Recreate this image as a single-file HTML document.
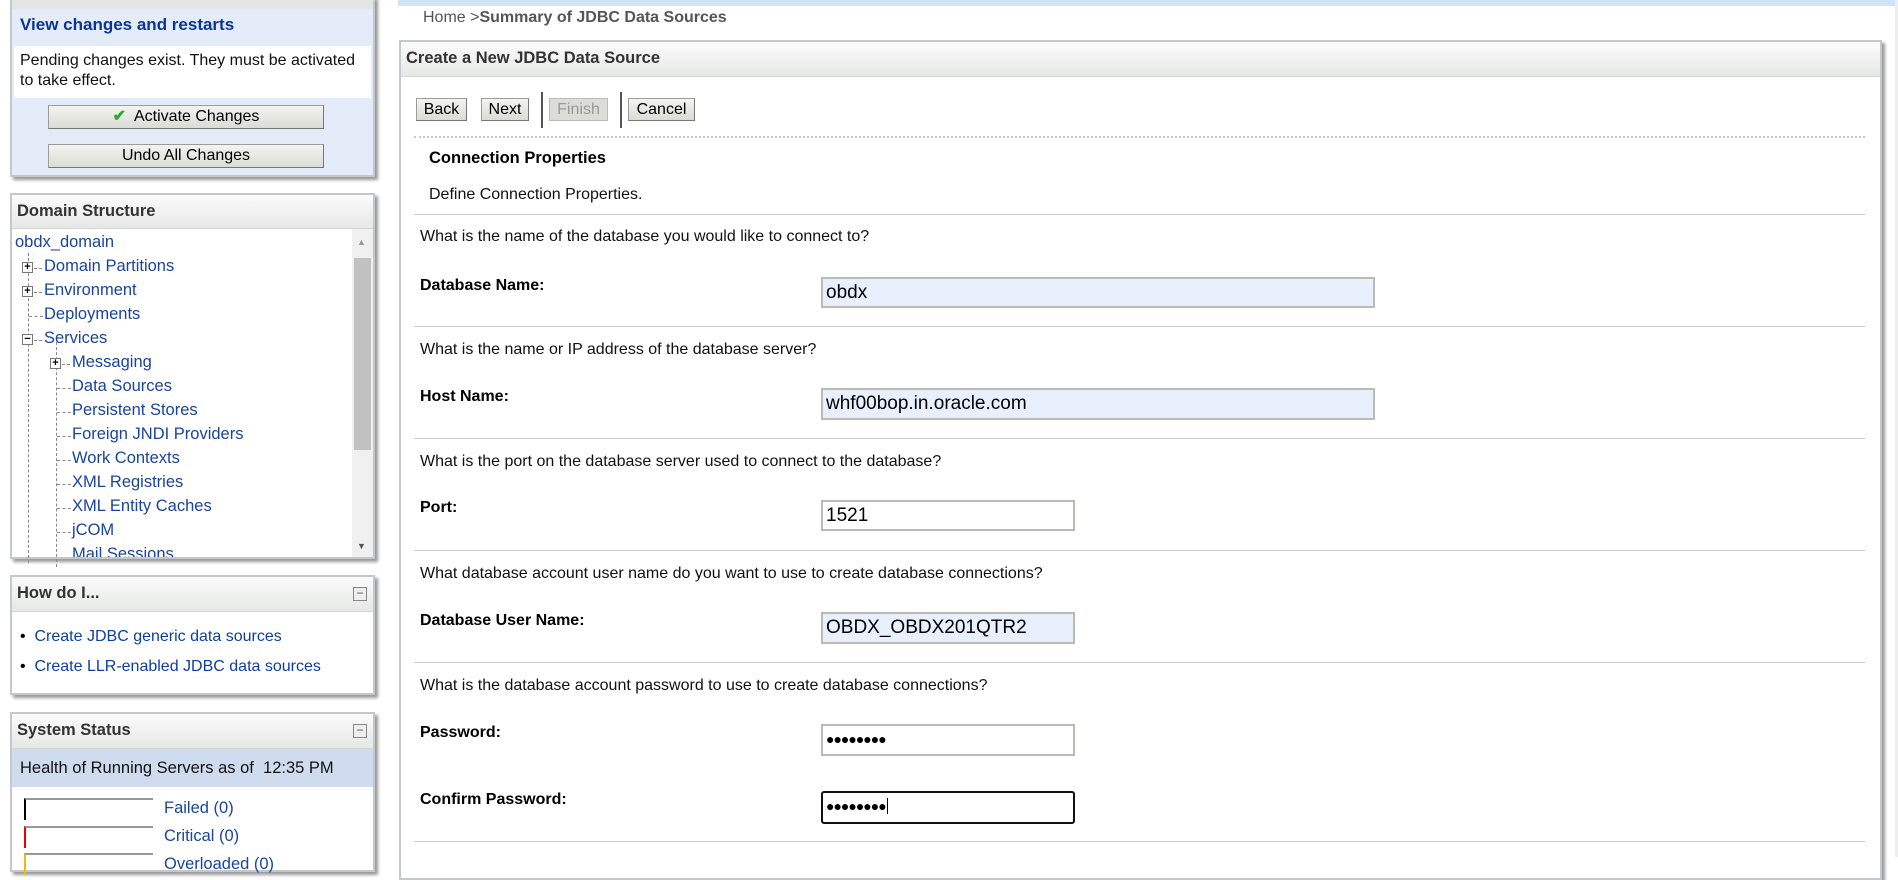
<!DOCTYPE html>
<html><head><meta charset="utf-8"><style>
*{margin:0;padding:0;box-sizing:border-box}
body{width:1898px;height:857px;overflow:hidden;background:#fff;font-family:"Liberation Sans",Arial,sans-serif;position:relative;color:#000}
.a{position:absolute}
.panel{position:absolute;background:#fff;border:2px solid #c5c8cb;box-shadow:3px 3px 3px #9a9a9a}
.hdr{position:absolute;left:0;right:0;top:0;background:linear-gradient(#fbfbfb,#e6e8e6);border-bottom:1px solid #d5d7d5;font-weight:bold;font-size:16.5px;color:#333;padding-left:5px}
.btn{position:absolute;background:linear-gradient(#f4f4f0,#dcdcd6);border:1px solid #9c9c9c;border-right-color:#777;border-bottom-color:#777;font-family:"Liberation Sans",Arial,sans-serif;font-size:16px;text-align:center;color:#000}
.lk{color:#0d3ea6;font-size:16px}
.q{position:absolute;left:420px;font-size:16px;color:#111}
.lb{position:absolute;left:420px;font-size:16px;font-weight:bold}
.in{position:absolute;left:821px;border:2px solid #bbbbb4;background:#e8f0fd;font-family:"Liberation Sans",Arial,sans-serif;font-size:19px;padding-left:3px;line-height:27px}
.ln{position:absolute;left:414px;width:1451px;height:0;border-top:1px solid #ccc}
.tr{position:absolute;font-size:16.5px;color:#1a44a0;white-space:nowrap}
.bx{position:absolute;width:11px;height:11px;border:1px solid #777;background:#fff;font-size:11px;line-height:8px;text-align:center;font-weight:bold;color:#000;font-family:"Liberation Sans",sans-serif}
</style></head><body>

<div class="panel" style="left:10px;top:-4px;width:365px;height:181px;background:#e4ecfa">
  <div class="a" style="left:0;right:0;top:0;height:11px;background:#e5e6e4"></div>
  <div class="a" style="left:8px;top:17px;font-weight:bold;font-size:17px;color:#0a3596">View changes and restarts</div>
  <div class="a" style="left:2px;right:2px;top:48px;height:52px;background:#fff;padding:5px 6px;font-size:16px;line-height:20px;color:#111">Pending changes exist. They must be activated to take effect.</div>
  <div class="btn" style="left:36px;top:107px;width:276px;height:24px;line-height:22px"><span style="color:#2ea82e;font-weight:bold">✔</span>&nbsp; Activate Changes</div>
  <div class="btn" style="left:36px;top:146px;width:276px;height:24px;line-height:22px">Undo All Changes</div>
</div>

<div class="panel" style="left:10px;top:193px;width:365px;height:366px">
  <div class="hdr" style="height:34px;line-height:32px">Domain Structure</div>
  <div class="a" style="left:340px;top:34px;width:21px;bottom:0;background:#f0f0f0"></div>
  <div class="a" style="left:342px;top:63px;width:17px;height:192px;background:#c1c1c1"></div>
  <div class="a" style="left:345px;top:42px;font-size:9px;color:#999">▲</div>
  <div class="a" style="left:345px;top:346px;font-size:9px;color:#555">▼</div>
  <div class="a" style="left:16px;top:58px;width:0;height:310px;border-left:1px dashed #888"></div>
  <div class="a" style="left:44px;top:142px;width:0;height:230px;border-left:1px dashed #888"></div>
  <div class="tr" style="left:3px;top:38px">obdx_domain</div>
  <div class="bx" style="left:10px;top:67px">+</div><div class="a" style="left:22px;top:73px;width:8px;border-top:1px dashed #888"></div><div class="tr" style="left:32px;top:62px">Domain Partitions</div>
  <div class="bx" style="left:10px;top:91px">+</div><div class="a" style="left:22px;top:97px;width:8px;border-top:1px dashed #888"></div><div class="tr" style="left:32px;top:86px">Environment</div>
  <div class="a" style="left:17px;top:121px;width:14px;border-top:1px dashed #888"></div><div class="tr" style="left:32px;top:110px">Deployments</div>
  <div class="bx" style="left:10px;top:139px">−</div><div class="a" style="left:22px;top:145px;width:8px;border-top:1px dashed #888"></div><div class="tr" style="left:32px;top:134px">Services</div>
  <div class="bx" style="left:38px;top:163px">+</div><div class="a" style="left:50px;top:169px;width:8px;border-top:1px dashed #888"></div><div class="tr" style="left:60px;top:158px">Messaging</div>
  <div class="a" style="left:45px;top:193px;width:14px;border-top:1px dashed #888"></div><div class="tr" style="left:60px;top:182px">Data Sources</div>
  <div class="a" style="left:45px;top:217px;width:14px;border-top:1px dashed #888"></div><div class="tr" style="left:60px;top:206px">Persistent Stores</div>
  <div class="a" style="left:45px;top:241px;width:14px;border-top:1px dashed #888"></div><div class="tr" style="left:60px;top:230px">Foreign JNDI Providers</div>
  <div class="a" style="left:45px;top:265px;width:14px;border-top:1px dashed #888"></div><div class="tr" style="left:60px;top:254px">Work Contexts</div>
  <div class="a" style="left:45px;top:289px;width:14px;border-top:1px dashed #888"></div><div class="tr" style="left:60px;top:278px">XML Registries</div>
  <div class="a" style="left:45px;top:313px;width:14px;border-top:1px dashed #888"></div><div class="tr" style="left:60px;top:302px">XML Entity Caches</div>
  <div class="a" style="left:45px;top:337px;width:14px;border-top:1px dashed #888"></div><div class="tr" style="left:60px;top:326px">jCOM</div>
  <div class="tr" style="left:60px;top:350px;height:12px;overflow:hidden">Mail Sessions</div>
</div>

<div class="panel" style="left:10px;top:575px;width:365px;height:120px">
  <div class="hdr" style="height:35px;line-height:33px">How do I...</div>
  <div class="a" style="left:341px;top:10px;width:14px;height:14px;border:1px solid #888;background:#eee;font-size:12px;line-height:10px;text-align:center;color:#555">−</div>
  <div class="a" style="left:8px;top:51px;font-size:16px">•&nbsp;&nbsp;<span class="lk">Create JDBC generic data sources</span></div>
  <div class="a" style="left:8px;top:81px;font-size:16px">•&nbsp;&nbsp;<span class="lk">Create LLR-enabled JDBC data sources</span></div>
</div>

<div class="panel" style="left:10px;top:712px;width:365px;height:160px">
  <div class="hdr" style="height:35px;line-height:33px">System Status</div>
  <div class="a" style="left:341px;top:10px;width:14px;height:14px;border:1px solid #888;background:#eee;font-size:12px;line-height:10px;text-align:center;color:#555">−</div>
  <div class="a" style="left:0;right:0;top:35px;height:38px;background:#cfdbee;font-size:16.5px;line-height:38px;padding-left:8px;color:#111">Health of Running Servers as of&nbsp; 12:35 PM</div>
  <div class="a" style="left:12px;top:84px;width:129px;height:22px;border-top:2px solid #999;border-left:2px solid #000"></div>
  <div class="tr" style="left:152px;top:85px">Failed (0)</div>
  <div class="a" style="left:12px;top:112px;width:129px;height:22px;border-top:2px solid #999;border-left:2px solid #e00"></div>
  <div class="tr" style="left:152px;top:113px">Critical (0)</div>
  <div class="a" style="left:12px;top:139px;width:129px;height:22px;border-top:2px solid #999;border-left:2px solid #e8c000"></div>
  <div class="tr" style="left:152px;top:141px">Overloaded (0)</div>
</div>

<div class="a" style="left:398px;top:0;width:1497px;height:6px;background:#d2e3f8"></div>
<div class="a" style="left:1895px;top:0;width:3px;height:857px;background:#eee"></div>
<div class="a" style="left:423px;top:9px;font-size:16px;color:#555">Home &gt;<b>Summary of JDBC Data Sources</b></div>

<div class="panel" style="left:399px;top:40px;width:1483px;height:840px">
  <div class="hdr" style="height:35px;line-height:33px">Create a New JDBC Data Source</div>
</div>
<div class="btn" style="left:416px;top:98px;width:51px;height:23px;line-height:21px">Back</div>
<div class="btn" style="left:481px;top:98px;width:48px;height:23px;line-height:21px">Next</div>
<div class="a" style="left:541px;top:92px;width:2px;height:36px;background:#555"></div>
<div class="btn" style="left:549px;top:98px;width:59px;height:23px;line-height:21px;color:#999;background:#ddddd8;border-color:#bbb">Finish</div>
<div class="a" style="left:620px;top:92px;width:2px;height:36px;background:#555"></div>
<div class="btn" style="left:628px;top:98px;width:67px;height:23px;line-height:21px">Cancel</div>
<div class="a" style="left:414px;top:136px;width:1451px;border-top:2px dotted #c8c8c8"></div>
<div class="a" style="left:429px;top:149px;font-size:16.5px;font-weight:bold">Connection Properties</div>
<div class="a" style="left:429px;top:186px;font-size:16px;color:#111">Define Connection Properties.</div>
<div class="ln" style="top:214px"></div>

<div class="q" style="top:228px">What is the name of the database you would like to connect to?</div>
<div class="lb" style="top:277px">Database Name:</div>
<div class="in" style="top:277px;width:554px;height:31px">obdx</div>
<div class="ln" style="top:326px"></div>

<div class="q" style="top:341px">What is the name or IP address of the database server?</div>
<div class="lb" style="top:388px">Host Name:</div>
<div class="in" style="top:388px;width:554px;height:32px">whf00bop.in.oracle.com</div>
<div class="ln" style="top:438px"></div>

<div class="q" style="top:453px">What is the port on the database server used to connect to the database?</div>
<div class="lb" style="top:499px">Port:</div>
<div class="in" style="top:500px;width:254px;height:31px;background:#fff">1521</div>
<div class="ln" style="top:550px"></div>

<div class="q" style="top:565px">What database account user name do you want to use to create database connections?</div>
<div class="lb" style="top:612px">Database User Name:</div>
<div class="in" style="top:612px;width:254px;height:32px">OBDX_OBDX201QTR2</div>
<div class="ln" style="top:662px"></div>

<div class="q" style="top:677px">What is the database account password to use to create database connections?</div>
<div class="lb" style="top:724px">Password:</div>
<div class="in" style="top:724px;width:254px;height:32px;background:#fff;font-size:14px;letter-spacing:-1px">●●●●●●●●</div>
<div class="lb" style="top:791px">Confirm Password:</div>
<div class="in" style="top:791px;width:254px;height:33px;background:#fff;border-color:#111;border-radius:3px;font-size:14px;letter-spacing:-1px">●●●●●●●●<span style="border-left:1px solid #000;margin-left:1px"> </span></div>
<div class="ln" style="top:841px"></div>
</body></html>
